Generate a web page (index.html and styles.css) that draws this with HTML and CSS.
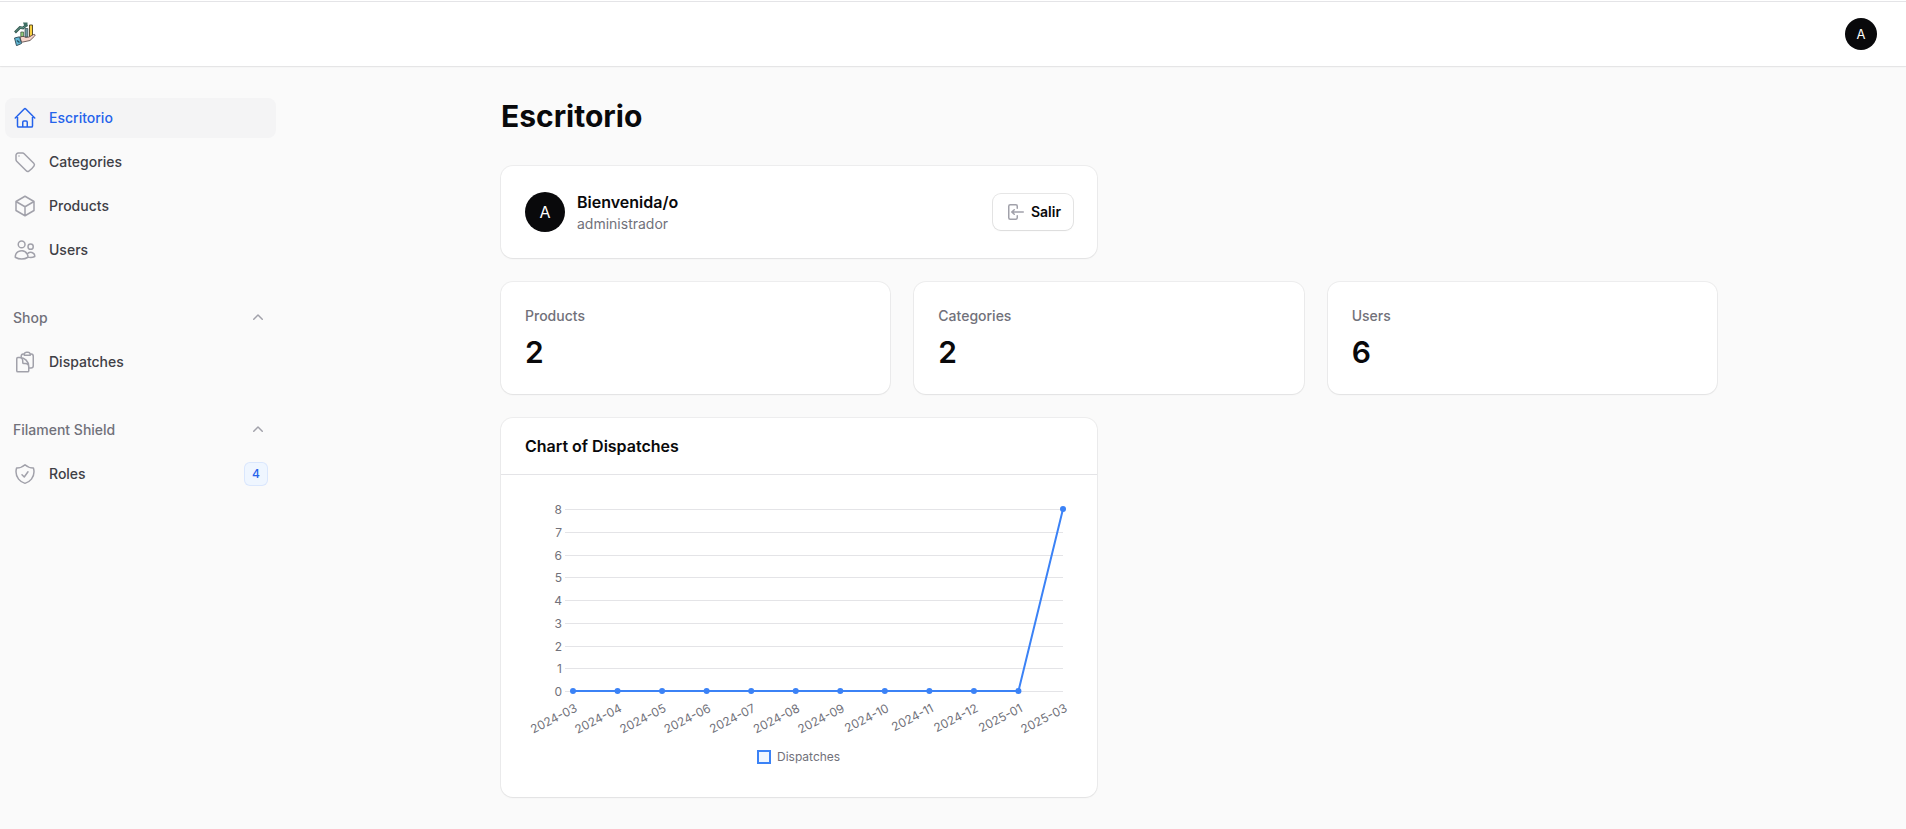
FILE: index.html
```html
<!DOCTYPE html>
<html lang="es">
<head>
<meta charset="utf-8">
<meta name="viewport" content="width=device-width, initial-scale=1">
<title>Escritorio</title>
<link rel="stylesheet" href="styles.css">
</head>
<body>
<header class="topbar">
  <a class="brand" href="#" aria-label="Inicio">
    <svg class="brand-logo" viewBox="0 0 24 24" aria-hidden="true">
      <path d="M2 10.500 7 5.500 10 6 14 2.500" fill="none" stroke="#33564f" stroke-width="2.600"/>
      <path d="M2.500 9.800 7 5.600 10 6 13.500 3" fill="none" stroke="#6fae9c" stroke-width=".8"/>
      <path d="M10 .5h4.500v4h-3z" fill="#3f6f64"/>
      <path d="M7.800 10h2.800v5H7.800z" fill="#8fcf7a" stroke="#3d4a3c" stroke-width=".7"/>
      <path d="M12 6.500h2.800V15H12z" fill="#6f98a3" stroke="#36474c" stroke-width=".7"/>
      <path d="M16.500 3h3v11.500h-3z" fill="#f7cf3d" stroke="#4a4024" stroke-width=".9"/>
      <path d="M7 15.500c2-1.500 4-1.500 5.500 0l3.500-.5 4.500-2.500c1.500-.4 2 .5 1.200 1.500L17 18.500l-8.500 1.800z" fill="#f8d5cb" stroke="#4b3b39" stroke-width=".8"/>
      <path d="m1.500 16 5-1.200 2 6.700-5 2.200z" fill="#62b6d3" stroke="#2c4650" stroke-width=".9"/>
      <path d="m4 18.500 2.500 2" stroke="#244f60" stroke-width="1.500"/>
    </svg>
  </a>
  <button class="avatar avatar-small" type="button" aria-label="Menú de usuario">A</button>
</header>

<div class="layout">
  <nav class="sidebar" aria-label="Principal">
    <ul class="nav-list">
      <li><a class="nav-item is-active" href="#" aria-current="page">
        <svg class="nav-icon" viewBox="0 0 24 24" aria-hidden="true"><path d="m2.250 12 8.954-8.955c.44-.439 1.152-.439 1.591 0L21.750 12M4.500 9.750v10.125c0 .621.504 1.125 1.125 1.125H9.750v-4.875c0-.621.504-1.125 1.125-1.125h2.250c.621 0 1.125.504 1.125 1.125V21h4.125c.621 0 1.125-.504 1.125-1.125V9.750M8.250 21h8.250"/></svg>
        <span>Escritorio</span></a></li>
      <li><a class="nav-item" href="#">
        <svg class="nav-icon" viewBox="0 0 24 24" aria-hidden="true"><path d="M9.568 3H5.250A2.250 2.250 0 0 0 3 5.250v4.318c0 .597.237 1.170.659 1.591l9.581 9.581c.699.699 1.780.872 2.607.33a18.095 18.095 0 0 0 5.223-5.223c.542-.827.369-1.908-.33-2.607L11.160 3.660A2.250 2.250 0 0 0 9.568 3Z"/><path d="M6 6h.008v.008H6V6Z"/></svg>
        <span>Categories</span></a></li>
      <li><a class="nav-item" href="#">
        <svg class="nav-icon" viewBox="0 0 24 24" aria-hidden="true"><path d="m21 7.500-9-5.250L3 7.500m18 0-9 5.250m9-5.250v9l-9 5.250M3 7.500l9 5.250M3 7.500v9l9 5.250m0-9v9"/></svg>
        <span>Products</span></a></li>
      <li><a class="nav-item" href="#">
        <svg class="nav-icon" viewBox="0 0 24 24" aria-hidden="true"><path d="M15 19.128a9.380 9.380 0 0 0 2.625.372 9.337 9.337 0 0 0 4.121-.952 4.125 4.125 0 0 0-7.533-2.493M15 19.128v-.003c0-1.113-.285-2.160-.786-3.070M15 19.128v.106A12.318 12.318 0 0 1 8.624 21c-2.331 0-4.512-.645-6.374-1.766l-.001-.109a6.375 6.375 0 0 1 11.964-3.070M12 6.375a3.375 3.375 0 1 1-6.750 0 3.375 3.375 0 0 1 6.750 0Zm8.250 2.250a2.625 2.625 0 1 1-5.250 0 2.625 2.625 0 0 1 5.250 0Z"/></svg>
        <span>Users</span></a></li>
    </ul>

    <section class="nav-group">
      <button class="nav-heading" type="button" aria-expanded="true">
        <span>Shop</span>
        <svg class="chevron" viewBox="0 0 20 20" aria-hidden="true"><path d="M9.470 6.470a.75.75 0 0 1 1.060 0l4.250 4.250a.75.75 0 1 1-1.060 1.060L10 8.060l-3.720 3.720a.75.75 0 0 1-1.060-1.060l4.250-4.250Z"/></svg>
      </button>
      <ul class="nav-list">
        <li><a class="nav-item" href="#">
          <svg class="nav-icon" viewBox="0 0 24 24" aria-hidden="true"><path d="M8.250 7.500V6.108c0-1.135.845-2.098 1.976-2.192.373-.03.748-.057 1.123-.08M15.750 18H18a2.250 2.250 0 0 0 2.250-2.250V6.108c0-1.135-.845-2.098-1.976-2.192a48.424 48.424 0 0 0-1.123-.08M15.750 18.750v-1.875a3.375 3.375 0 0 0-3.375-3.375h-1.500a1.125 1.125 0 0 1-1.125-1.125v-1.500A3.375 3.375 0 0 0 6.375 7.500H5.250m11.900-3.664A2.251 2.251 0 0 0 15 2.250h-1.500a2.251 2.251 0 0 0-2.150 1.586m5.800 0c.065.21.1.433.1.664v.75h-6V4.500c0-.231.035-.454.1-.664M6.750 7.500H4.875c-.621 0-1.125.504-1.125 1.125v12c0 .621.504 1.125 1.125 1.125h9.750c.621 0 1.125-.504 1.125-1.125V16.500a9 9 0 0 0-9-9Z"/></svg>
          <span>Dispatches</span></a></li>
      </ul>
    </section>

    <section class="nav-group">
      <button class="nav-heading" type="button" aria-expanded="true">
        <span>Filament Shield</span>
        <svg class="chevron" viewBox="0 0 20 20" aria-hidden="true"><path d="M9.470 6.470a.75.75 0 0 1 1.060 0l4.250 4.250a.75.75 0 1 1-1.060 1.060L10 8.060l-3.720 3.720a.75.75 0 0 1-1.060-1.060l4.250-4.250Z"/></svg>
      </button>
      <ul class="nav-list">
        <li><a class="nav-item" href="#">
          <svg class="nav-icon" viewBox="0 0 24 24" aria-hidden="true"><path d="M9 12.750 11.250 15 15 9.750m-3-7.036A11.959 11.959 0 0 1 3.598 6 11.990 11.990 0 0 0 3 9.749c0 5.592 3.824 10.290 9 11.623 5.176-1.332 9-6.030 9-11.622 0-1.310-.21-2.571-.598-3.751h-.152c-3.196 0-6.100-1.248-8.250-3.285Z"/></svg>
          <span>Roles</span><span class="badge">4</span></a></li>
      </ul>
    </section>
  </nav>

  <main class="main">
    <div class="page">
      <h1 class="page-title">Escritorio</h1>
      <div class="widgets">
        <section class="card account">
          <span class="avatar" aria-hidden="true">A</span>
          <div class="account-text">
            <h2 class="card-title">Bienvenida/o</h2>
            <p class="account-name">administrador</p>
          </div>
          <button class="button" type="button">
            <svg class="button-icon" viewBox="0 0 20 20" aria-hidden="true"><path d="M3 4.250A2.250 2.250 0 0 1 5.250 2h5.500A2.250 2.250 0 0 1 13 4.250v2a.75.75 0 0 1-1.500 0v-2a.75.75 0 0 0-.75-.75h-5.500a.75.75 0 0 0-.75.75v11.500c0 .414.336.75.75.75h5.500a.75.75 0 0 0 .75-.75v-2a.75.75 0 0 1 1.500 0v2A2.250 2.250 0 0 1 10.750 18h-5.500A2.250 2.250 0 0 1 3 15.750V4.250Z"/><path d="M19 10a.75.75 0 0 0-.75-.75H8.704l1.048-.943a.75.75 0 1 0-1.004-1.114l-2.500 2.250a.75.75 0 0 0 0 1.114l2.500 2.250a.75.75 0 1 0 1.004-1.114l-1.048-.943h9.546A.75.75 0 0 0 19 10Z"/></svg>
            <span>Salir</span>
          </button>
        </section>

        <div class="stats">
          <section class="card stat"><h2 class="stat-label">Products</h2><p class="stat-value">2</p></section>
          <section class="card stat"><h2 class="stat-label">Categories</h2><p class="stat-value">2</p></section>
          <section class="card stat"><h2 class="stat-label">Users</h2><p class="stat-value">6</p></section>
        </div>

        <section class="card">
          <header class="card-header"><h2 class="card-title">Chart of Dispatches</h2></header>
          <div class="card-body">
            <svg class="chart" viewBox="0 0 548 274" role="img" aria-label="Dispatches" id="chart"></svg>
          </div>
        </section>
      </div>
    </div>
  </main>
</div>
<script src="chart.js"></script>
</body>
</html>
```
FILE: styles.css
```css
*, *::before, *::after { box-sizing: border-box; }

body {
  margin: 0;
  min-height: 100vh;
  border-top: 1px solid #fff;
  background: #fafafa;
  color: #09090b;
  font: 14px/20px Inter, "Liberation Sans", sans-serif;
}

h1, h2, p, ul { margin: 0; padding: 0; }
ul { list-style: none; }
a { color: inherit; text-decoration: none; }
button { font: inherit; color: inherit; border: 0; padding: 0; background: none; cursor: pointer; }
svg { display: block; flex-shrink: 0; }

.topbar {
  display: flex;
  align-items: center;
  justify-content: space-between;
  height: 65px;
  padding: 0 29px 0 13px;
  background: #fff;
  border-top: 1px solid #e4e4e7;
  box-shadow: 0 0 0 1px rgba(9, 9, 11, .05), 0 1px 2px rgba(0, 0, 0, .05);
}

.brand-logo { width: 24px; height: 24px; }

.avatar {
  display: flex;
  align-items: center;
  justify-content: center;
  flex-shrink: 0;
  width: 40px;
  height: 40px;
  border-radius: 50%;
  background: #09090b;
  color: #fff;
  font-size: 16px;
}
.avatar-small { width: 32px; height: 32px; font-size: 13px; }

.layout { display: flex; align-items: flex-start; }

.sidebar {
  display: flex;
  flex-direction: column;
  flex-shrink: 0;
  gap: 28px;
  width: 301px;
  padding: 32px 25px 32px 5px;
}

.nav-group, .nav-list { display: flex; flex-direction: column; gap: 4px; }

.nav-item {
  display: flex;
  align-items: center;
  gap: 12px;
  padding: 8px;
  border-radius: 8px;
  color: #3f3f46;
  font-weight: 500;
}
.nav-item.is-active { background: #f4f4f5; color: #2563eb; }

.nav-icon {
  width: 24px;
  height: 24px;
  fill: none;
  stroke: #a1a1aa;
  stroke-width: 1.5;
  stroke-linecap: round;
  stroke-linejoin: round;
}
.is-active .nav-icon { stroke: #2563eb; }

.nav-heading {
  display: flex;
  align-items: center;
  justify-content: space-between;
  padding: 8px;
  color: #71717a;
  font-weight: 500;
  line-height: 24px;
}

.chevron, .button-icon { width: 20px; height: 20px; fill: #a1a1aa; }

.badge {
  min-width: 24px;
  margin-left: auto;
  padding: 4px 8px;
  border-radius: 6px;
  background: #eff6ff;
  box-shadow: inset 0 0 0 1px rgba(37, 99, 235, .1);
  color: #2563eb;
  font-size: 12px;
  line-height: 16px;
  text-align: center;
}

.main { flex: 1; min-width: 0; padding: 32px 32px 32px 43px; }
.page { display: flex; flex-direction: column; gap: 32px; max-width: 1216px; margin: 0 auto; }
.page-title { font-size: 30px; line-height: 36px; font-weight: 700; }

.widgets { display: grid; grid-template-columns: repeat(2, minmax(0, 1fr)); gap: 24px; }

.card {
  border-radius: 12px;
  background: #fff;
  box-shadow: 0 0 0 1px rgba(9, 9, 11, .05), 0 1px 2px rgba(0, 0, 0, .05);
}
.card-title { font-size: 16px; line-height: 24px; font-weight: 600; }
.card-header { padding: 16px 24px; border-bottom: 1px solid #e4e4e7; }
.card-body { padding: 24px; }

.account { display: flex; align-items: center; gap: 12px; padding: 24px; }
.account-text { flex: 1; }
.account-name { color: #71717a; }

.button {
  display: flex;
  align-items: center;
  gap: 6px;
  padding: 8px 12px;
  border-radius: 8px;
  background: #fff;
  box-shadow: 0 0 0 1px rgba(9, 9, 11, .1), 0 1px 2px rgba(0, 0, 0, .05);
  font-weight: 600;
}

.stats { display: grid; grid-column: 1 / -1; grid-template-columns: repeat(3, minmax(0, 1fr)); gap: 24px; }
.stat { display: flex; flex-direction: column; gap: 8px; padding: 24px; }
.stat-label { color: #71717a; font-size: 14px; font-weight: 500; }
.stat-value { font-size: 30px; line-height: 36px; font-weight: 600; }

.chart { width: 100%; height: auto; }
.chart text { fill: #71717a; font-size: 12px; }
.chart .tick { text-anchor: end; }
.chart .grid { stroke: #e4e4e7; stroke-width: 1; }
.chart .line { fill: none; stroke: #3b82f6; stroke-width: 2; stroke-linejoin: round; }
.chart .point { fill: #3b82f6; }
.chart .swatch { fill: #eff6ff; stroke: #3b82f6; stroke-width: 2; }
```
FILE: chart.js
```js
const chart = document.getElementById("chart");
const months = ["2024-03", "2024-04", "2024-05", "2024-06", "2024-07", "2024-08",
  "2024-09", "2024-10", "2024-11", "2024-12", "2025-01", "2025-03"];
const values = [0, 0, 0, 0, 0, 0, 0, 0, 0, 0, 0, 8];
const plot = { left: 48, right: 538, top: 10, bottom: 192, max: 8 };

const xAt = i => plot.left + i * (plot.right - plot.left) / (months.length - 1);
const yAt = v => plot.bottom - v * (plot.bottom - plot.top) / plot.max;

function add(tag, attrs, text) {
  const node = document.createElementNS("http://www.w3.org/2000/svg", tag);
  for (const name in attrs) node.setAttribute(name, attrs[name]);
  if (text !== undefined) node.textContent = text;
  chart.appendChild(node);
}

for (let v = 0; v <= plot.max; v++) {
  const y = Math.round(yAt(v)) + 0.5;
  add("line", { class: "grid", x1: 40, x2: plot.right, y1: y, y2: y });
  add("text", { class: "tick", x: 37, y: y + 4 }, v);
}

months.forEach((month, i) => {
  add("text", { class: "tick", transform: `translate(${xAt(i) + 5} 212) rotate(-27)` }, month);
});

add("polyline", { class: "line", points: values.map((v, i) => `${xAt(i)},${yAt(v)}`).join(" ") });
values.forEach((v, i) => add("circle", { class: "point", cx: xAt(i), cy: yAt(v), r: 3 }));

add("rect", { class: "swatch", x: 233, y: 252, width: 12, height: 12 });
add("text", { x: 252, y: 262 }, "Dispatches");
```
